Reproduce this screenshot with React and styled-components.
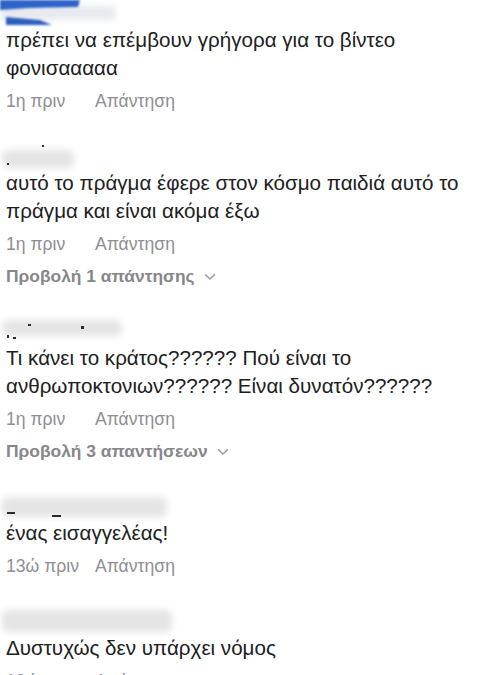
import React from 'react';
import styled, { createGlobalStyle } from 'styled-components';

const GlobalStyle = createGlobalStyle`
  html, body {
    margin: 0;
    padding: 0;
    background: #ffffff;
    overflow: hidden;
  }
  body {
    font-family: "Liberation Sans", Arial, sans-serif;
  }
`;

const comments = [
  {
    name: 'blue',
    text: ['πρέπει να επέμβουν γρήγορα για το βίντεο', 'φονισααααα'],
    time: '1η πριν',
  },
  {
    name: 'a',
    text: ['αυτό το πράγμα έφερε στον κόσμο παιδιά αυτό το', 'πράγμα και είναι ακόμα έξω'],
    time: '1η πριν',
    replies: 'Προβολή 1 απάντησης',
  },
  {
    name: 'b',
    text: ['Τι κάνει το κράτος?????? Πού είναι το', 'ανθρωποκτονιων?????? Είναι δυνατόν??????'],
    time: '1η πριν',
    replies: 'Προβολή 3 απαντήσεων',
  },
  {
    name: 'c',
    text: ['ένας εισαγγελέας!'],
    time: '13ώ πριν',
  },
  {
    name: 'd',
    text: ['Δυστυχώς δεν υπάρχει νόμος'],
    time: '13ώ πριν',
  },
];

const NameSmudge = ({ kind }) => {
  if (kind === 'blue') {
    return (
      <svg width="180" height="26" viewBox="0 0 180 26">
        <defs>
          <filter id="bb" x="-20%" y="-50%" width="140%" height="200%">
            <feGaussianBlur stdDeviation="1.2" />
          </filter>
          <filter id="bg" x="-20%" y="-50%" width="140%" height="200%">
            <feGaussianBlur stdDeviation="3" />
          </filter>
        </defs>
        <rect x="0" y="6" width="115" height="14" fill="#e6e9ee" filter="url(#bg)" />
        <polygon points="0,0 80,0 78,7 30,8 0,10" fill="#2e63c8" filter="url(#bb)" />
        <polygon points="6,17 40,20 52,25 6,25" fill="#2f5fbf" filter="url(#bb)" />
      </svg>
    );
  }
  const cfg = {
    a: { w: 72, y: 7, h: 18, dots: [[42, 2, 2, 2], [7, 20, 2, 2]] },
    b: { w: 120, y: 2, h: 16, dots: [[28, 6, 3, 2], [81, 8, 3, 3], [7, 17, 2, 3], [13, 19, 3, 2]] },
    c: { w: 165, y: 4, h: 20, dots: [[7, 19, 8, 2], [52, 22, 9, 2]] },
    d: { w: 170, y: 2, h: 22, dots: [] },
  }[kind];
  return (
    <svg width="200" height="26" viewBox="0 0 200 26">
      <defs>
        <filter id={`g${kind}`} x="-20%" y="-60%" width="140%" height="220%">
          <feGaussianBlur stdDeviation="3.5" />
        </filter>
        <filter id={`d${kind}`}>
          <feGaussianBlur stdDeviation="0.5" />
        </filter>
      </defs>
      <rect x="2" y={cfg.y} width={cfg.w} height={cfg.h} rx="6" fill="#e4e4e4" filter={`url(#g${kind})`} />
      {cfg.dots.map(([x, y, w, h], i) => (
        <rect key={i} x={x} y={y} width={w} height={h} fill="#2a2a2a" filter={`url(#d${kind})`} />
      ))}
    </svg>
  );
};

const App = () => (
  <>
    <GlobalStyle />
    <List>
      {comments.map((c, i) => (
        <Comment key={i}>
          <Name>
            <NameSmudge kind={c.name} />
          </Name>
          <Body>
            {c.text.map((line, j) => (
              <div key={j}>{line}</div>
            ))}
          </Body>
          <Meta>
            <Time>{c.time}</Time>
            <Reply>Απάντηση</Reply>
          </Meta>
          {c.replies && (
            <ViewReplies>
              {c.replies}
              <svg width="12" height="8" viewBox="0 0 12 8">
                <path d="M1.5 1.8 L6 6 L10.5 1.8" fill="none" stroke="#9a9ba0" strokeWidth="1.5" strokeLinecap="round" strokeLinejoin="round" />
              </svg>
            </ViewReplies>
          )}
        </Comment>
      ))}
    </List>
  </>
);

const List = styled.div`
  display: flex;
  flex-direction: column;
  margin-top: -30px;
  padding-left: 6px;
`;

const Comment = styled.div`
  display: flex;
  flex-direction: column;
  padding-top: 30px;
`;

const Name = styled.div`
  height: 26px;
  margin-left: -6px;

  svg {
    display: block;
    overflow: visible;
  }
`;

const Body = styled.div`
  font-size: 20.6px;
  line-height: 28px;
  color: #202022;
`;

const Meta = styled.div`
  display: flex;
  align-items: center;
  margin-top: 7px;
  font-size: 17.6px;
  line-height: 24px;
  color: #8e8e93;
`;

const Time = styled.span`
  min-width: 89px;
`;

const Reply = styled.span``;

const ViewReplies = styled.div`
  display: flex;
  align-items: center;
  gap: 9px;
  margin-top: 8px;
  font-size: 17.4px;
  line-height: 24px;
  font-weight: 700;
  color: #86868b;

  svg {
    margin-top: 2px;
  }
`;

export default App;
